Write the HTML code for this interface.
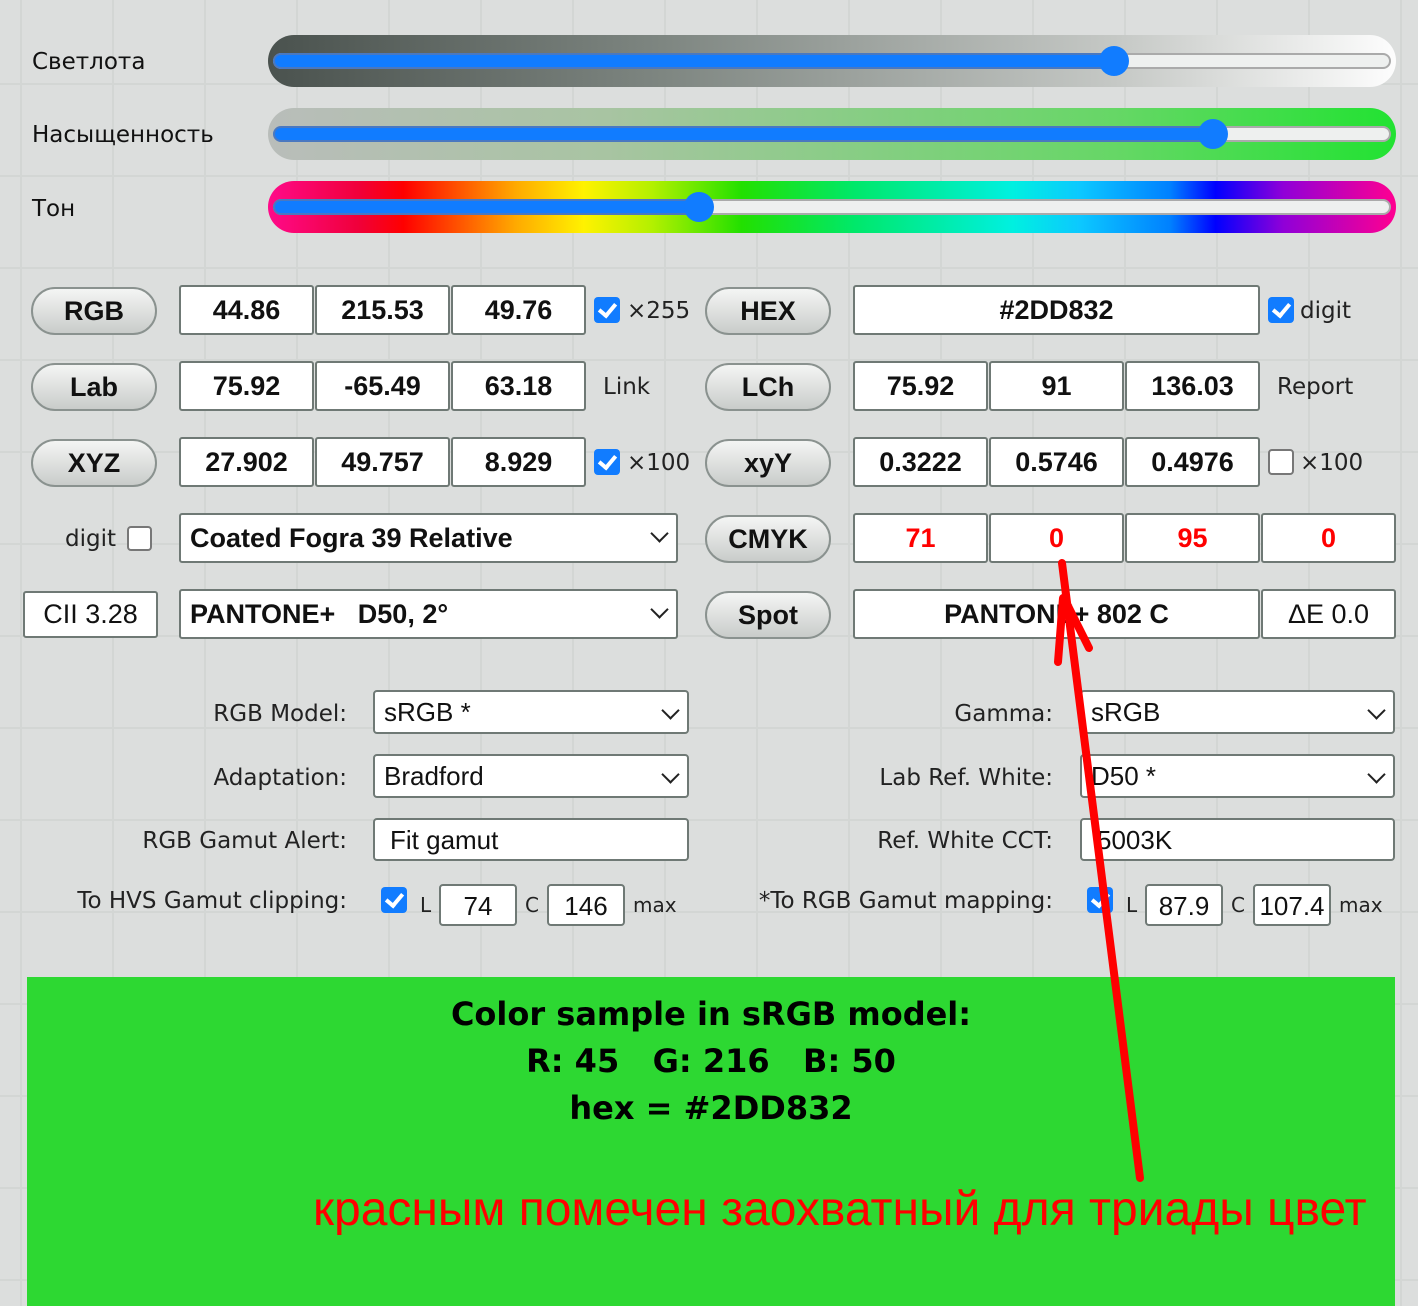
<!DOCTYPE html>
<html><head><meta charset="utf-8"><style>
*{box-sizing:border-box;margin:0;padding:0}
body{width:1418px;height:1306px;position:relative;overflow:hidden;font-family:"DejaVu Sans","Liberation Sans",sans-serif;
background-color:#dcdedd;
background-image:linear-gradient(#d3d6d4 2px,transparent 2px),linear-gradient(90deg,#d3d6d4 2px,transparent 2px);
background-size:92px 92px;background-position:20px -9px;}
.a{position:absolute}
.lbl{position:absolute;font-size:23px;color:#111;white-space:nowrap}
.bar{position:absolute;left:268px;width:1128px;height:52px;border-radius:26px}
.trk{position:absolute;left:5px;right:5px;top:18px;height:16px;border-radius:8px;background:#eef0ef;border:2px solid #aaa}
.fill{position:absolute;left:5px;top:18px;height:16px;border-radius:8px;background:#117cff;border:2px solid #4a78c0}
.th{position:absolute;top:11px;width:30px;height:30px;border-radius:50%;background:#117cff}
.btn{position:absolute;width:126px;height:48px;border-radius:24px;border:2px solid #8a928f;background:linear-gradient(#f4f5f4,#c9ccca);font:bold 27px "Liberation Sans",sans-serif;text-align:center;line-height:44px;color:#111}
.in{position:absolute;height:50px;background:#fff;border:2px solid #6f7975;border-radius:3px;font:bold 27px "Liberation Sans",sans-serif;text-align:center;line-height:46px;color:#111;white-space:nowrap}
.red{color:#f00}
.cb{position:absolute;width:26px;height:26px;border-radius:4px;background:#117cff}
.cb:after{content:"";position:absolute;left:8px;top:3px;width:7px;height:13px;border:solid #fff;border-width:0 4px 4px 0;transform:rotate(40deg)}
.cbo{position:absolute;width:26px;height:26px;border-radius:4px;background:#fff;border:2px solid #777}
.sm{position:absolute;font-size:23px;color:#222;white-space:nowrap}
.sel{position:absolute;height:44px;background:#fff;border:2px solid #6f7975;border-radius:4px;font:26px "Liberation Sans",sans-serif;line-height:40px;padding-left:9px;color:#111}
.chev{position:absolute;right:10px;top:12px;width:13px;height:13px;border:solid #222;border-width:0 2px 2px 0;transform:rotate(45deg)}
.r{text-align:right}
</style></head><body>
<div class="lbl" style="left:32px;top:49px">Светлота</div>
<div class="lbl" style="left:32px;top:122px">Насыщенность</div>
<div class="lbl" style="left:32px;top:196px">Тон</div>

<div class="bar" style="top:35px;background:linear-gradient(90deg,#4a524e,#7e8681 35%,#c5c8c5 75%,#fdfdfd)"><div class="trk"></div><div class="fill" style="width:846px"></div><div class="th" style="left:831px"></div></div>
<div class="bar" style="top:108px;background:linear-gradient(90deg,#b9bdba,#a8c4a2 30%,#66d766 75%,#22e232)"><div class="trk"></div><div class="fill" style="width:945px"></div><div class="th" style="left:930px"></div></div>
<div class="bar" style="top:181px;background:linear-gradient(90deg,#ff0a8a 0%,#f0003a 8%,#ff0000 12%,#ffaa00 22%,#fff200 28%,#b4f000 34%,#22e000 42%,#00e86a 52%,#00f0e0 66%,#0cc8ff 72%,#0080ff 80%,#0000ff 84%,#9000d8 90%,#ff0090 100%)"><div class="trk"></div><div class="fill" style="width:430px"></div><div class="th" style="left:416px"></div></div>

<div class="btn" style="left:31px;top:287px">RGB</div>
<div class="in" style="left:179px;top:285px;width:135px">44.86</div>
<div class="in" style="left:315px;top:285px;width:135px">215.53</div>
<div class="in" style="left:451px;top:285px;width:135px">49.76</div>
<div class="cb" style="left:594px;top:297px"></div><div class="sm" style="left:627px;top:298px">×255</div>
<div class="btn" style="left:705px;top:287px">HEX</div>
<div class="in" style="left:853px;top:285px;width:407px">#2DD832</div>
<div class="cb" style="left:1268px;top:297px"></div><div class="sm" style="left:1300px;top:298px">digit</div>

<div class="btn" style="left:31px;top:363px">Lab</div>
<div class="in" style="left:179px;top:361px;width:135px">75.92</div>
<div class="in" style="left:315px;top:361px;width:135px">-65.49</div>
<div class="in" style="left:451px;top:361px;width:135px">63.18</div>
<div class="sm" style="left:603px;top:374px">Link</div>
<div class="btn" style="left:705px;top:363px">LCh</div>
<div class="in" style="left:853px;top:361px;width:135px">75.92</div>
<div class="in" style="left:989px;top:361px;width:135px">91</div>
<div class="in" style="left:1125px;top:361px;width:135px">136.03</div>
<div class="sm" style="left:1277px;top:374px">Report</div>

<div class="btn" style="left:31px;top:439px">XYZ</div>
<div class="in" style="left:179px;top:437px;width:135px">27.902</div>
<div class="in" style="left:315px;top:437px;width:135px">49.757</div>
<div class="in" style="left:451px;top:437px;width:135px">8.929</div>
<div class="cb" style="left:594px;top:449px"></div><div class="sm" style="left:627px;top:450px">×100</div>
<div class="btn" style="left:705px;top:439px">xyY</div>
<div class="in" style="left:853px;top:437px;width:135px">0.3222</div>
<div class="in" style="left:989px;top:437px;width:135px">0.5746</div>
<div class="in" style="left:1125px;top:437px;width:135px">0.4976</div>
<div class="cbo" style="left:1268px;top:449px"></div><div class="sm" style="left:1300px;top:450px">×100</div>

<div class="sm" style="left:65px;top:526px">digit</div><div class="cbo" style="left:127px;top:526px;width:25px;height:25px"></div>
<div class="in" style="left:179px;top:513px;width:499px;text-align:left;padding-left:9px">Coated Fogra 39 Relative<div class="chev" style="top:12px"></div></div>
<div class="btn" style="left:705px;top:515px">CMYK</div>
<div class="in red" style="left:853px;top:513px;width:135px">71</div>
<div class="in red" style="left:989px;top:513px;width:135px">0</div>
<div class="in red" style="left:1125px;top:513px;width:135px">95</div>
<div class="in red" style="left:1261px;top:513px;width:135px">0</div>

<div class="in" style="left:23px;top:591px;width:135px;font-weight:normal;height:47px;line-height:43px">CII 3.28</div>
<div class="in" style="left:179px;top:589px;width:499px;text-align:left;padding-left:9px">PANTONE+ &nbsp; D50, 2°<div class="chev" style="top:12px"></div></div>
<div class="btn" style="left:705px;top:591px">Spot</div>
<div class="in" style="left:853px;top:589px;width:407px">PANTONE+ 802 C</div>
<div class="in" style="left:1261px;top:589px;width:135px;font-weight:normal">ΔE 0.0</div>

<div class="sm r" style="right:1071px;top:701px">RGB Model:</div>
<div class="sel" style="left:373px;top:690px;width:316px">sRGB *<div class="chev"></div></div>
<div class="sm r" style="right:1071px;top:765px">Adaptation:</div>
<div class="sel" style="left:373px;top:754px;width:316px">Bradford<div class="chev"></div></div>
<div class="sm r" style="right:1071px;top:828px">RGB Gamut Alert:</div>
<div class="sel" style="left:373px;top:818px;width:316px;height:43px;padding-left:15px">Fit gamut</div>
<div class="sm r" style="right:1071px;top:888px">To HVS Gamut clipping:</div>
<div class="cb" style="left:381px;top:887px"></div>
<div class="sm" style="left:420px;top:893px;font-size:20px">L</div>
<div class="sel" style="left:439px;top:884px;width:78px;height:42px;text-align:center;padding:0">74</div>
<div class="sm" style="left:525px;top:893px;font-size:20px">C</div>
<div class="sel" style="left:547px;top:884px;width:78px;height:42px;text-align:center;padding:0">146</div>
<div class="sm" style="left:633px;top:893px;font-size:20px">max</div>

<div class="sm r" style="right:365px;top:701px">Gamma:</div>
<div class="sel" style="left:1080px;top:690px;width:315px">sRGB<div class="chev"></div></div>
<div class="sm r" style="right:365px;top:765px">Lab Ref. White:</div>
<div class="sel" style="left:1080px;top:754px;width:315px">D50 *<div class="chev"></div></div>
<div class="sm r" style="right:365px;top:828px">Ref. White CCT:</div>
<div class="sel" style="left:1080px;top:818px;width:315px;height:43px;padding-left:15px">5003K</div>
<div class="sm r" style="right:365px;top:888px">*To RGB Gamut mapping:</div>
<div class="cb" style="left:1087px;top:887px"></div>
<div class="sm" style="left:1126px;top:893px;font-size:20px">L</div>
<div class="sel" style="left:1145px;top:884px;width:78px;height:42px;text-align:center;padding:0">87.9</div>
<div class="sm" style="left:1231px;top:893px;font-size:20px">C</div>
<div class="sel" style="left:1253px;top:884px;width:78px;height:42px;text-align:center;padding:0">107.4</div>
<div class="sm" style="left:1339px;top:893px;font-size:20px">max</div>

<div class="a" style="left:27px;top:977px;width:1368px;height:329px;background:#2dd832"></div>
<div class="a" style="left:27px;top:991px;width:1368px;text-align:center;font:bold 32px/47px 'DejaVu Sans',sans-serif;color:#000">Color sample in sRGB model:<br>R: 45 &nbsp; G: 216 &nbsp; B: 50<br>hex = #2DD832</div>
<div class="a" style="left:313px;top:1182px;font:48px 'Liberation Sans',sans-serif;color:#f00;white-space:nowrap">красным помечен заохватный для триады цвет</div>

<svg class="a" style="left:0;top:0" width="1418" height="1306"><g stroke="#f00" stroke-width="8" stroke-linecap="round" fill="none"><path d="M1140 1178 L1062 563"/><path d="M1058 662 L1063 598"/><path d="M1064 598 L1089 648"/></g></svg>
</body></html>
